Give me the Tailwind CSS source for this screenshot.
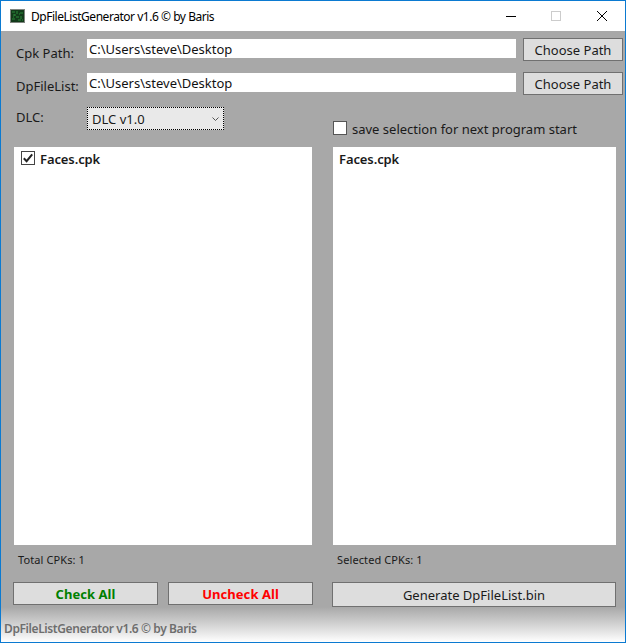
<!DOCTYPE html>
<html>
<head>
<meta charset="utf-8">
<script src="https://cdn.jsdelivr.net/npm/@tailwindcss/browser@4"></script>
</head>
<body class="bg-white overflow-hidden">
<div class="w-[626px] h-[643px] flex flex-col border border-[#0b7ad1] bg-[#a8a8a8] font-['Noto_Sans','Open_Sans',sans-serif] text-[#1a1a1a] text-[13px] leading-none overflow-hidden">
  <!-- title bar -->
  <div class="h-[30px] bg-white flex items-center shrink-0 relative">
    <svg class="ml-[9px] w-[15px] h-[14px]" viewBox="0 0 15 14">
      <rect width="15" height="14" fill="#7f857f"/>
      <rect x="1" y="1" width="13" height="12" fill="#123a1a"/>
      <path d="M2 3h3M7 2v3M10 4h3M3 6h2M6 8h3M11 7v3M2 10h3M8 11h3M5 5v2M9 5h1M12 11h1M3 8h1" stroke="#2a8a3a" stroke-width="1"/>
    </svg>
    <span class="ml-[6px] pt-[1px] text-[12px] text-black tracking-[-0.47px]">DpFileListGenerator v1.6 © by Baris</span>
    <div class="ml-auto flex items-center h-full">
      <span class="w-[10px] h-[1px] bg-black mr-[35px]"></span>
      <span class="w-[10px] h-[10px] border border-[#cccccc] mr-[36px]"></span>
      <svg class="w-[10px] h-[10px] mr-[18px]" viewBox="0 0 10 10"><path d="M0 0L10 10M10 0L0 10" stroke="#000" stroke-width="1"/></svg>
    </div>
  </div>

  <!-- path rows -->
  <div class="flex h-[23px] mt-[7px] pl-[15px]">
    <span class="w-[71px] pt-[9px]">Cpk Path:</span>
    <div class="w-[429px] h-[19px] mt-[1px] bg-white pl-[2px] pt-[2px] flex items-center text-[#111]">C:\Users\steve\Desktop</div>
    <button class="ml-[7px] w-[100px] h-[23px] pt-[2px] bg-[#dddddd] border border-[#707070]">Choose Path</button>
  </div>
  <div class="flex h-[23px] mt-[11px] pl-[15px]">
    <span class="w-[71px] pt-[8px]">DpFileList:</span>
    <div class="w-[429px] h-[19px] mt-[1px] bg-white pl-[2px] pt-[2px] flex items-center text-[#111]">C:\Users\steve\Desktop</div>
    <button class="ml-[7px] w-[100px] h-[23px] pt-[2px] bg-[#dddddd] border border-[#707070]">Choose Path</button>
  </div>

  <!-- DLC row -->
  <div class="flex h-[28px] mt-[12px] pl-[15px]">
    <span class="w-[71px] pt-[4px]">DLC:</span>
    <div class="w-[137px] h-[23px] pt-[1px] bg-[#e9e9e9] border border-dotted border-black flex items-center pl-[4px]">
      <span class="pt-[1px]">DLC v1.0</span>
      <svg class="ml-auto mr-[4px] w-[7px] h-[5px]" viewBox="0 0 7 5"><path d="M0.5 0.5L3.5 3.5L6.5 0.5" fill="none" stroke="#555" stroke-width="1"/></svg>
    </div>
    <div class="ml-[109px] mt-[14px] flex items-center h-[14px]">
      <span class="w-[14px] h-[14px] bg-white border border-[#555]"></span>
      <span class="ml-[5px] pt-[2px]">save selection for next program start</span>
    </div>
  </div>

  <!-- lists -->
  <div class="flex h-[398px] mt-[12px] pl-[13px]">
    <div class="w-[298px] bg-white flex items-start pl-[7px] pt-[4px]">
      <svg class="w-[14px] h-[14px]" viewBox="0 0 14 14"><rect x="0.5" y="0.5" width="13" height="13" fill="#fff" stroke="#444"/><path d="M2.8 7.2L5.6 10.2L11.2 3.4" fill="none" stroke="#222" stroke-width="2"/></svg>
      <span class="ml-[5px] font-semibold tracking-[-0.1px] pt-[2px]">Faces.cpk</span>
    </div>
    <div class="w-[283px] ml-[21px] bg-white pl-[6px] pt-[6px]">
      <span class="font-semibold tracking-[-0.1px]">Faces.cpk</span>
    </div>
  </div>

  <!-- counts -->
  <div class="flex h-[37px] pt-[9px] text-[11px] tracking-[0.1px]">
    <span class="ml-[17px] w-[319px]">Total CPKs: 1</span>
    <span>Selected CPKs: 1</span>
  </div>

  <!-- buttons -->
  <div class="flex items-start h-[25px] pl-[12px]">
    <button class="w-[145px] h-[23px] pt-[2px] bg-[#dddddd] border border-[#707070] font-bold text-[#008000] tracking-[0.05px]">Check All</button>
    <button class="ml-[10px] w-[145px] h-[23px] pt-[2px] bg-[#dddddd] border border-[#707070] font-bold text-[#ff0000] tracking-[0.05px]">Uncheck All</button>
    <button class="ml-[19px] w-[284px] h-[25px] pt-[2px] bg-[#dddddd] border border-[#707070]">Generate DpFileList.bin</button>
  </div>

  <!-- status -->
  <div class="flex-1 bg-linear-to-b from-[#a8a8a8] to-white flex items-end pl-[3px] pb-[7px]">
    <span class="text-[12px] font-semibold text-[#6e6e6e] tracking-[-0.4px]">DpFileListGenerator v1.6 © by Baris</span>
  </div>
</div>
</body>
</html>
